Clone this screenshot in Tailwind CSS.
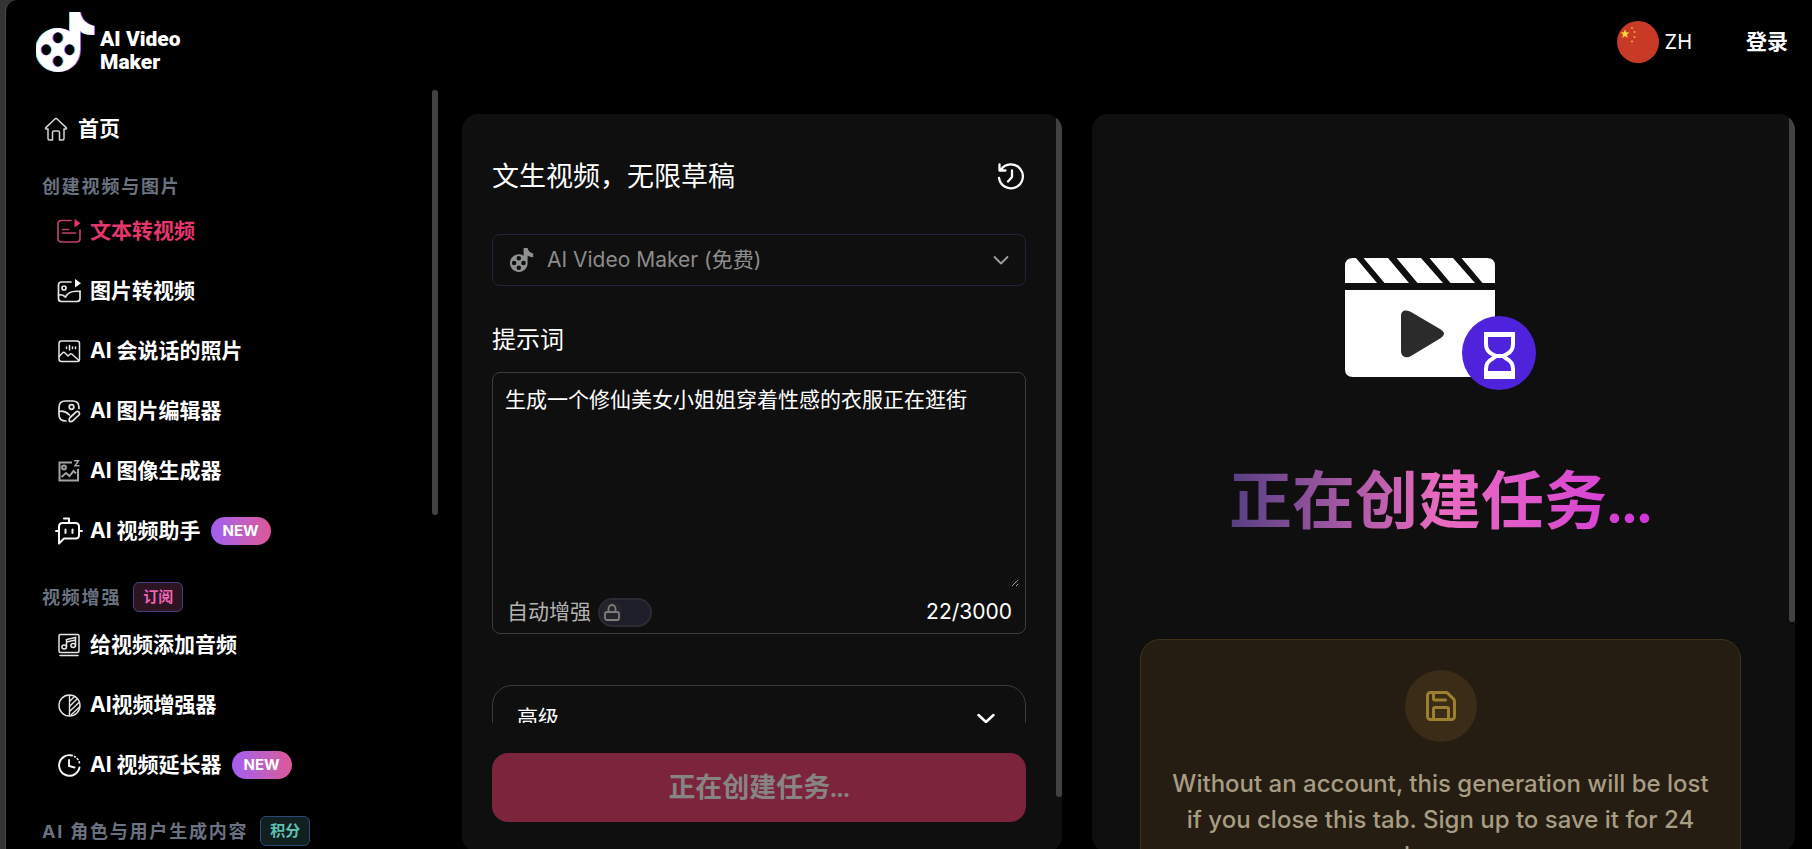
<!DOCTYPE html>
<html lang="zh-CN">
<head>
    <meta charset="UTF-8">
    <meta name="viewport" content="width=device-width, initial-scale=1.0">
    <title>AI Video Maker</title>
    <script src="https://cdn.jsdelivr.net/npm/@tailwindcss/browser@4"></script>
</head>
<body class="h-screen overflow-hidden bg-[#343434] font-['Inter','Noto_Sans_CJK_SC',sans-serif] text-white">

    <!-- shared logo shape -->
    <svg class="hidden">
        <symbol id="logo" viewBox="0 0 60 60">
            <path fill-rule="evenodd" d="M34 0H44C45 7 50 12 58 14V23C52 23 48 22 44 19V38A22 22 0 1 1 34 19.500ZM22 20A5.700 5.700 0 1 0 22 31.400A5.700 5.700 0 1 0 22 20ZM10.300 32A5.700 5.700 0 1 0 10.300 43.400A5.700 5.700 0 1 0 10.300 32ZM33.700 32A5.700 5.700 0 1 0 33.700 43.400A5.700 5.700 0 1 0 33.700 32ZM22 43.500A5.700 5.700 0 1 0 22 54.900A5.700 5.700 0 1 0 22 43.500Z"/>
        </symbol>
    </svg>

    <div class="ml-[5px] flex h-full flex-col rounded-tl-xl border-l border-[#4a4a4a] bg-black">
        <header class="flex h-[90px] shrink-0 items-center justify-between pr-6 pl-[30px]">
            <a href="#" class="flex items-center gap-1">
                <svg class="mb-1.5 size-[60px]" viewBox="0 0 60 60">
                    <use href="#logo" x="-1" width="60" height="60" fill="#5fe3f0"/>
                    <use href="#logo" x="1" width="60" height="60" fill="#b45cf0"/>
                    <use href="#logo" width="60" height="60" fill="#fff"/>
                </svg>
                <span class="mt-3 font-['Roboto',sans-serif] text-[21px] leading-[23px] font-black">AI Video<br>Maker</span>
            </a>
            <div class="mb-[6px] flex items-center gap-[54px]">
                <button class="flex items-center gap-1.5 text-[20px]">
                    <svg class="size-[42px]" viewBox="0 0 42 42">
                        <circle cx="21" cy="21" r="21" fill="#c83a26"/>
                        <path fill="#f8d33a" d="M8 8l1.200 3.300 3.300.1-2.600 2.100.9 3.400L8 15l-2.800 1.900.9-3.400-2.600-2.100 3.300-.1z"/>
                        <g fill="#f0a030"><circle cx="15" cy="7" r="1.100"/><circle cx="17.500" cy="11" r="1.100"/><circle cx="17.500" cy="16" r="1.100"/><circle cx="15" cy="20.500" r="1.100"/></g>
                    </svg>
                    ZH
                </button>
                <button class="text-[21px] font-bold">登录</button>
            </div>
        </header>

        <div class="flex min-h-0 flex-1">
            <aside class="relative w-[432px] shrink-0 overflow-hidden pt-[9px] pl-9">
                <nav class="text-[21px] font-bold">
                    <a href="#" class="flex h-[60px] items-center gap-[10px] pl-[2px]">
                        <svg class="size-6" viewBox="0 0 24 24" fill="none" stroke="#d4d4d4" stroke-width="1.500" stroke-linejoin="round" stroke-linecap="round"><path d="M4 12H2.200Q1 11.500 1.900 10.600L11.200 1.700Q12 1 12.800 1.700L22.100 10.600Q23 11.500 21.800 12H20V21Q20 23 18.500 23H15.500V15.500Q15.500 14 14 14H10Q8.500 14 8.500 15.500V23H5.500Q4 23 4 21Z"/></svg>
                        <span>首页</span>
                    </a>

                    <h3 class="flex h-[42px] items-center pt-3 text-[18px] tracking-widest text-gray-500">创建视频与图片</h3>
                    <ul>
                        <li><a href="#" class="flex h-[60px] items-center gap-[9px] pl-[15px] text-[#e6366d]">
                            <svg class="size-6" viewBox="0 0 24 24" fill="none" stroke="#c23e6b" stroke-width="1.700" stroke-linecap="round"><path d="M14 1.500H4.500Q1 1.500 1 5V19.500Q1 23 4.500 23H19.500Q23 23 23 19.500V11"/><path d="M5.500 10.500H11.500M5.500 14H18.500"/><path fill="#e6366d" stroke="none" d="M17.500 0V8.500L23.500 4.200Z"/></svg>
                            <span>文本转视频</span></a></li>
                        <li><a href="#" class="flex h-[60px] items-center gap-[9px] pl-[15px]">
                            <svg class="size-6" viewBox="0 0 24 24" fill="none" stroke="#e5e5e5" stroke-width="1.700" stroke-linecap="round"><path d="M14 3H4.500Q1.500 3 1.500 6V19.500Q1.500 22.500 4.500 22.500H20Q23 22.500 23 19.500V12"/><circle cx="7" cy="9" r="2"/><path d="M1.500 16Q5 15 8.500 18Q12 11 23 12.500"/><path fill="#fff" stroke="none" d="M18 0V8.500L24 4.200Z"/></svg>
                            <span>图片转视频</span></a></li>
                        <li><a href="#" class="flex h-[60px] items-center gap-[9px] pl-[15px]">
                            <svg class="size-6" viewBox="0 0 24 24" fill="none" stroke="#e5e5e5" stroke-width="1.500" stroke-linecap="round" stroke-linejoin="round"><rect x="2" y="2" width="20.500" height="20.500" rx="2.500"/><path d="M2 17.500L6 13.500Q7 13 8 14L11 17L13 15.200Q14 14.500 15 15.200L22 21.500M9.500 8V9.500M12.500 6.500V11M15.500 8V9.500M18.500 8V9.500"/></svg>
                            <span>AI 会说话的照片</span></a></li>
                        <li><a href="#" class="flex h-[60px] items-center gap-[9px] pl-[15px]">
                            <svg class="size-6" viewBox="0 0 24 24" fill="none" stroke="#e5e5e5" stroke-width="1.700" stroke-linecap="round" stroke-linejoin="round"><path d="M9 22Q2 22 2 15.500V8.500Q2 2 8.500 2H15.500Q22 2 22 8.500V9.500"/><circle cx="14.500" cy="8" r="2.300"/><path d="M2 12.500Q7.500 11 12.500 16"/><path d="M13 18.500L19.200 12.800Q20.700 12 22 13.200Q23 14.500 22 16L16 21.700Q14.500 22.800 12.500 22.500Q11.800 20 13 18.500Z"/></svg>
                            <span>AI 图片编辑器</span></a></li>
                        <li><a href="#" class="flex h-[60px] items-center gap-[9px] pl-[15px]">
                            <svg class="size-6" viewBox="0 0 24 24" fill="none" stroke="#a3a3a3" stroke-width="2"><path d="M15 3.500H2.500V21.500H21V10"/><circle cx="7" cy="8.500" r="1.900"/><path d="M4.500 18L9 14L12.500 17L16.500 12L19 14.500"/><path stroke-width="1.500" d="M17 1.800H21.500L18 6.800H22.500"/></svg>
                            <span>AI 图像生成器</span></a></li>
                        <li><a href="#" class="flex h-[60px] items-center gap-[7px] pl-[13px]">
                            <svg class="size-7" viewBox="0 0 28 28" fill="none" stroke="#f5f5f5" stroke-width="2" stroke-linecap="round" stroke-linejoin="round"><path d="M4 26.500V9.500Q4 6 7.500 6H20.500Q24 6 24 9.500V18Q24 21.500 20.500 21.500H9ZM14 6V1.500H9M1 14H4M24 14H27M10.500 12.500V16M17.500 12.500V16"/></svg>
                            <span>AI 视频助手</span>
                            <span class="ml-[3px] rounded-full bg-linear-to-r from-[#a25df0] to-[#dc5698] px-3 text-[15px] leading-7">NEW</span></a></li>
                    </ul>

                    <h3 class="flex h-[54px] items-center gap-3 pt-[18px] text-[18px] tracking-widest text-gray-500">视频增强
                        <span class="rounded-md border border-[#48407a] bg-[#2c1422] px-[9px] text-[15px] leading-7 tracking-normal text-[#ee63b4]">订阅</span></h3>
                    <ul>
                        <li><a href="#" class="flex h-[60px] items-center gap-[9px] pl-[15px]">
                            <svg class="size-6" viewBox="0 0 24 24" fill="none" stroke="#e5e5e5" stroke-width="1.500" stroke-linecap="round"><rect x="2" y="1.500" width="20" height="18" rx="1.500"/><path d="M3 22.500H21M9.500 13.500V6.500L18.500 4.500V12M9.500 9L18.500 7"/><ellipse cx="7.200" cy="14" rx="2.300" ry="1.900"/><ellipse cx="16.200" cy="12.500" rx="2.300" ry="1.900"/></svg>
                            <span>给视频添加音频</span></a></li>
                        <li><a href="#" class="flex h-[60px] items-center gap-[9px] pl-[15px]">
                            <svg class="size-6" viewBox="0 0 24 24" fill="none" stroke="#e5e5e5" stroke-width="1.400"><circle cx="12.500" cy="12.500" r="10.500"/><path d="M12.500 2V23M12.500 8.500L17.500 3.500M12.500 13.500L20.500 5.500M12.500 18.500L22.500 9M14 22L23 13.500"/></svg>
                            <span>AI视频增强器</span></a></li>
                        <li><a href="#" class="flex h-[60px] items-center gap-[9px] pl-[15px]">
                            <svg class="size-6" viewBox="0 0 24 24" fill="none" stroke="#f5f5f5" stroke-width="1.900" stroke-linecap="round"><path d="M22.500 14.500A10.300 10.300 0 1 1 15 2.500M12 7V13L17.500 14.500"/><path stroke-width="1.600" stroke-dasharray="1 2.500" d="M17.500 3.500A10.300 10.300 0 0 1 22.800 12"/></svg>
                            <span>AI 视频延长器</span>
                            <span class="ml-px rounded-full bg-linear-to-r from-[#a25df0] to-[#dc5698] px-3 text-[15px] leading-7">NEW</span></a></li>
                    </ul>

                    <h3 class="flex h-[54px] items-center gap-3 pt-[18px] text-[18px] tracking-widest text-gray-500">AI 角色与用户生成内容
                        <span class="rounded-md border border-[#2c4a78] bg-[#11201f] px-[9px] text-[15px] leading-7 tracking-normal text-[#5fc0b4]">积分</span></h3>
                </nav>
                <div class="absolute top-0 right-0 h-[425px] w-1.5 rounded-full bg-[#424242]"></div>
            </aside>

            <main class="mt-6 ml-6 grid h-[calc(100vh-111px)] flex-1 grid-cols-[600fr_703fr] gap-[30px] pr-[17px]">
                <section class="relative flex min-h-0 flex-col overflow-hidden rounded-2xl bg-[#0f0f0f] pr-9 pl-[30px]">
                    <div class="min-h-0 flex-1 overflow-hidden">
                        <div class="mt-[42px] flex h-[42px] items-center justify-between">
                            <h1 class="text-[27px]">文生视频，无限草稿</h1>
                            <button aria-label="历史">
                                <svg class="size-[30px]" viewBox="0 0 30 30" fill="none" stroke="#fff" stroke-width="2.300" stroke-linecap="round" stroke-linejoin="round"><path d="M5 7.500A12 12 0 1 1 3 16M3.500 2.500V8.500H9.500M16 8.500V15L12 19.500"/></svg>
                            </button>
                        </div>

                        <div class="relative mt-9 text-[#8c8c8c]">
                            <svg class="absolute top-3.5 left-[18px] size-6 fill-[#8f9193]"><use href="#logo"/></svg>
                            <select aria-label="模型" disabled class="h-[52px] w-full appearance-none rounded-lg border border-[#25233c] bg-transparent pl-[54px] text-[21px] opacity-100">
                                <option>AI Video Maker (免费)</option>
                            </select>
                            <svg class="absolute top-[17px] right-4 size-[18px]" viewBox="0 0 18 18" fill="none" stroke="#a0a0a0" stroke-width="1.800" stroke-linecap="round" stroke-linejoin="round"><path d="M2.500 6L9 12.500L15.500 6"/></svg>
                        </div>

                        <label for="prompt" class="mt-9 block text-[24px] leading-9">提示词</label>
                        <div class="mt-3.5 rounded-lg border border-[#3c3c3c] px-1.5 pt-1.5">
                            <textarea id="prompt" class="block h-[208px] w-full resize-y p-1.5 text-[21px] leading-[30px] outline-none">生成一个修仙美女小姐姐穿着性感的衣服正在逛街</textarea>
                            <div class="flex h-[46px] items-center justify-between pt-1 pr-[7px] pb-0 pl-2 text-[21px]">
                                <label class="flex items-center gap-[7px] text-[#b4b4b4]">自动增强
                                    <span class="relative flex h-[29px] w-[54px] items-center">
                                        <input type="checkbox" disabled class="absolute inset-0 h-full w-full appearance-none rounded-full border-2 border-[#2b2b33] bg-[#1d1e29]">
                                        <svg class="relative ml-1 size-5 rounded-md bg-[#24242a]" viewBox="0 0 20 20" fill="none" stroke="#7d7d7d" stroke-width="1.800"><rect x="3" y="10" width="14" height="8" rx="2"/><path d="M6.500 10V6.500A3.500 3.500 0 0 1 13.500 6.500V10"/></svg>
                                    </span>
                                </label>
                                <span>22/3000</span>
                            </div>
                        </div>

                        <div class="mt-[51px] rounded-[20px] border border-[#3c3c3c]">
                            <button class="flex h-[64px] w-full items-center justify-between pr-[30px] pl-6 text-[21px]">高级
                                <svg class="size-[18px]" viewBox="0 0 18 18" fill="none" stroke="#fff" stroke-width="2.500" stroke-linecap="round" stroke-linejoin="round"><path d="M1.500 6L9 13L16.500 6"/></svg>
                            </button>
                            <div class="h-40"></div>
                        </div>
                    </div>
                    <div class="shrink-0 py-[30px]">
                        <button disabled class="h-[69px] w-full rounded-2xl bg-[#7b243c] font-['Lato','Noto_Sans_CJK_SC',sans-serif] text-[27px] font-bold text-[#878484]">正在创建任务...</button>
                    </div>
                    <div class="absolute top-0 right-0 h-[683px] w-1.5 rounded-full bg-[#424242]"></div>
                </section>

                <section class="relative flex min-h-0 flex-col items-center overflow-hidden rounded-2xl bg-[#0f0f0f] pr-[54px] pl-12">
                    <svg class="mt-36 h-[132px] w-[191px] shrink-0" viewBox="0 0 191 132">
                        <path fill="#fff" d="M0 32H150V119H8Q0 119 0 111Z"/>
                        <path fill="#fff" d="M8 0H11L32 25H0V8Q0 0 8 0ZM18.500 0H43L64 25H39.500ZM51.500 0H76L98 25H72.500ZM84.500 0H108L130 25H105.500ZM116.500 0H142Q150 0 150 8V25H137.500Z"/>
                        <path fill="#2b2b2b" d="M56 58Q56 53 60 52.500Q63 52 66 54L95 71Q99 73.500 99 75.500Q99 78 95 80.500L66 98Q63 100 60 99Q56 98 56 93Z"/>
                        <circle cx="154" cy="95" r="37" fill="#4f22dc"/>
                        <g fill="none" stroke="#fff" stroke-width="4"><path d="M141 77V86Q141 93 147 96L151 98L147 101Q141 104 141 111V116M168 77V86Q168 93 162 96L158 98L162 101Q168 104 168 111V116"/></g>
                        <path fill="#fff" d="M139 74H170V79H139ZM139 113H170V121H139ZM150 96H159L161 98L159 100H150L148 98Z"/>
                    </svg>
                    <h2 class="mt-16 bg-linear-to-r from-[#573e82] via-[#ea6bc0] to-[#d232d8] bg-clip-text font-['Lato','Noto_Sans_CJK_SC',sans-serif] text-[63px] leading-[90px] font-bold text-transparent">正在创建任务...</h2>
                    <div class="mt-[95px] flex w-full shrink-0 flex-col items-center rounded-[20px] border border-[#3e3419] bg-[#251c12] px-7 py-[30px]">
                        <div class="flex size-[72px] items-center justify-center rounded-full bg-[#3b2c18]">
                            <svg class="size-9" viewBox="0 0 24 24" fill="none" stroke="#9c8030" stroke-width="2" stroke-linecap="round" stroke-linejoin="round"><path d="M15.200 3a2 2 0 0 1 1.400.6l3.800 3.800a2 2 0 0 1 .6 1.400V19a2 2 0 0 1-2 2H5a2 2 0 0 1-2-2V5a2 2 0 0 1 2-2z"/><path d="M17 21v-7a1 1 0 0 0-1-1H8a1 1 0 0 0-1 1v7M7 3v4a1 1 0 0 0 1 1h7"/></svg>
                        </div>
                        <p class="mt-6 text-center text-[24px] leading-9 font-medium text-[#a79d83]">Without an account, this generation will be lost if you close this tab. Sign up to save it for 24 hours.</p>
                    </div>
                    <div class="absolute top-0 right-0 h-[508px] w-1.5 rounded-full bg-[#424242]"></div>
                </section>
            </main>
        </div>
    </div>
</body>
</html>
